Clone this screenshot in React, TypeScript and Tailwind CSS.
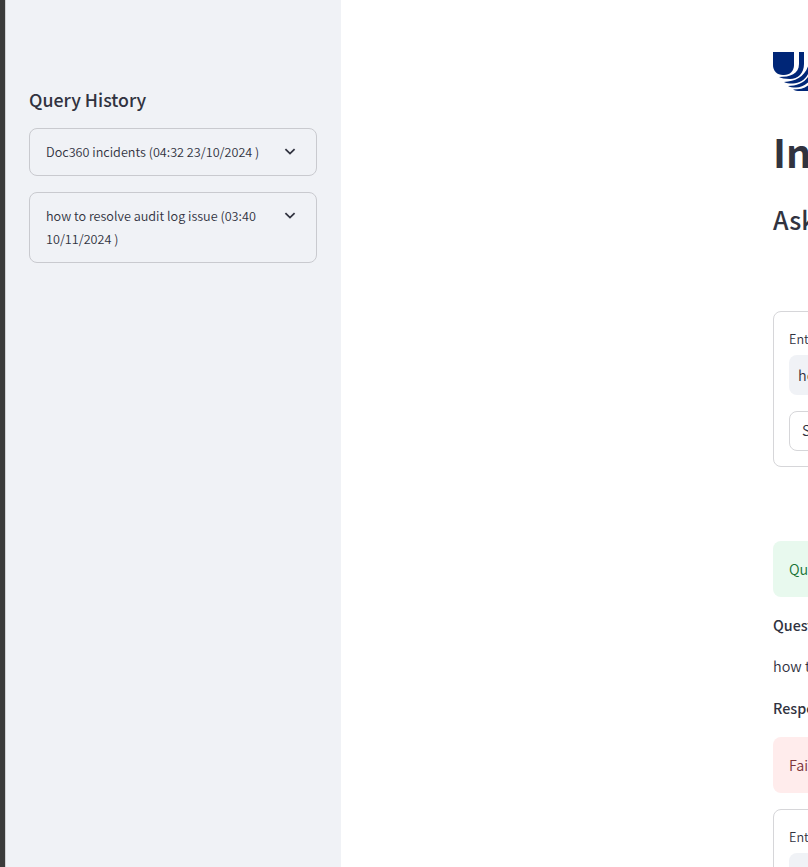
import type { ReactNode } from "react";

const history = [
  ["Doc360 incidents (04:32 23/10/2024 )"],
  ["how to resolve audit log issue (03:40", "10/11/2024 )"],
];

function Chevron() {
  return (
    <svg className="mt-[3px] h-4 w-4 shrink-0" viewBox="0 0 16 16" fill="none" stroke="#31333f" strokeWidth="1.8">
      <path d="M3.4 5.2 L8 9.6 L12.6 5.2" />
    </svg>
  );
}

function HistoryItem({ lines }: { lines: string[] }) {
  return (
    <div className="flex justify-between rounded-lg border border-[#c9cacf] py-3 pr-[18px] pl-4 text-[12.65px] leading-[23px] font-[350] text-[#31333f]">
      <div className="-mt-px">
        {lines.map((line) => (
          <div key={line} className="whitespace-nowrap">{line}</div>
        ))}
      </div>
      <Chevron />
    </div>
  );
}

function Logo() {
  return (
    <svg className="mt-[52px] block h-10 w-[35px] shrink-0" viewBox="0 0 35 40" fill="#002677">
      <path d="M0 0H21V13C21 19 17 23 11 23H10C4 23 0 19 0 13Z" />
      <path d="M26 0H31V12C31 21 25 27 17 27C12 27 8 26 6 25C17 25 26 22 26 12Z" />
      <path d="M35 14.5V22C32 28 26 31.5 20 31.5C16 31.5 13 31 11 30C22 29.5 31 25 35 14.5Z" />
      <path d="M35 25V30.5C31 34 27 35.5 23 35.5C19 35.5 17 35 15 34C23 34 31 31 35 25Z" />
      <path d="M35 33.5V39H27C24 39 22 38.5 20 37.5C26 37.5 31 36.5 35 33.5Z" />
    </svg>
  );
}

function Form({ className, children }: { className: string; children?: ReactNode }) {
  return (
    <div className={`h-[156px] shrink-0 rounded-lg border border-[#d6d6d9] px-[15px] pt-[15px] ${className}`}>
      <div className="h-[28px] text-[12.65px] leading-6 font-[350]">Enter your query</div>
      <div className="h-10 rounded-lg bg-[#f0f2f6] px-[9px] text-[14.4px] leading-10 font-[350]">how to resolve audit log issue</div>
      {children}
    </div>
  );
}

export default function App() {
  return (
    <div className="flex h-[867px] w-[808px] overflow-hidden bg-white font-['Noto_Sans_CJK_SC',sans-serif] text-[#31333f]">
      <div className="w-[5px] shrink-0 bg-[#3b3b3b]" />
      <aside className="w-[336px] shrink-0 border-l border-[#d0d1d4] bg-[#f0f2f6] pr-6 pl-[23px]">
        <h3 className="mt-[87px] mb-[17px] h-6 text-[17.8px] leading-6 font-medium whitespace-nowrap">Query History</h3>
        <div className="flex flex-col gap-4">
          {history.map((lines) => (
            <HistoryItem key={lines[0]} lines={lines} />
          ))}
        </div>
      </aside>
      <main className="flex w-[1100px] shrink-0 flex-col pr-[400px] pl-[432px] whitespace-nowrap">
        <Logo />
        <h1 className="mt-[32px] h-[53px] text-[39.4px] leading-[53px] font-bold">Incident Search</h1>
        <h2 className="mt-[25px] h-[34px] text-[25px] leading-[34px] font-medium">Ask a question</h2>
        <Form className="mt-[75px]">
          <button className="mt-4 block h-10 rounded-lg border border-[#d6d6d9] bg-white px-3 pb-0.5 text-[14.4px] font-[350]">Submit</button>
        </Form>
        <div className="mt-[74px] h-14 shrink-0 rounded-lg bg-[#e8f9ee] px-4 text-[14.4px] leading-[56px] font-[350] text-[#177233]">Query submitted</div>
        <p className="mt-4 h-6 shrink-0 text-[14.32px] leading-6 font-medium">Question:</p>
        <p className="mt-[17px] h-6 shrink-0 text-[14.4px] leading-6 font-[350]">how to resolve audit log issue</p>
        <p className="mt-[18px] h-6 shrink-0 text-[14.32px] leading-6 font-medium">Response:</p>
        <div className="mt-[17px] h-14 shrink-0 rounded-lg bg-[#ffecec] px-4 text-[14.4px] leading-[56px] font-[350] text-[#7d353b]">Failed to get response</div>
        <Form className="mt-4" />
      </main>
    </div>
  );
}
